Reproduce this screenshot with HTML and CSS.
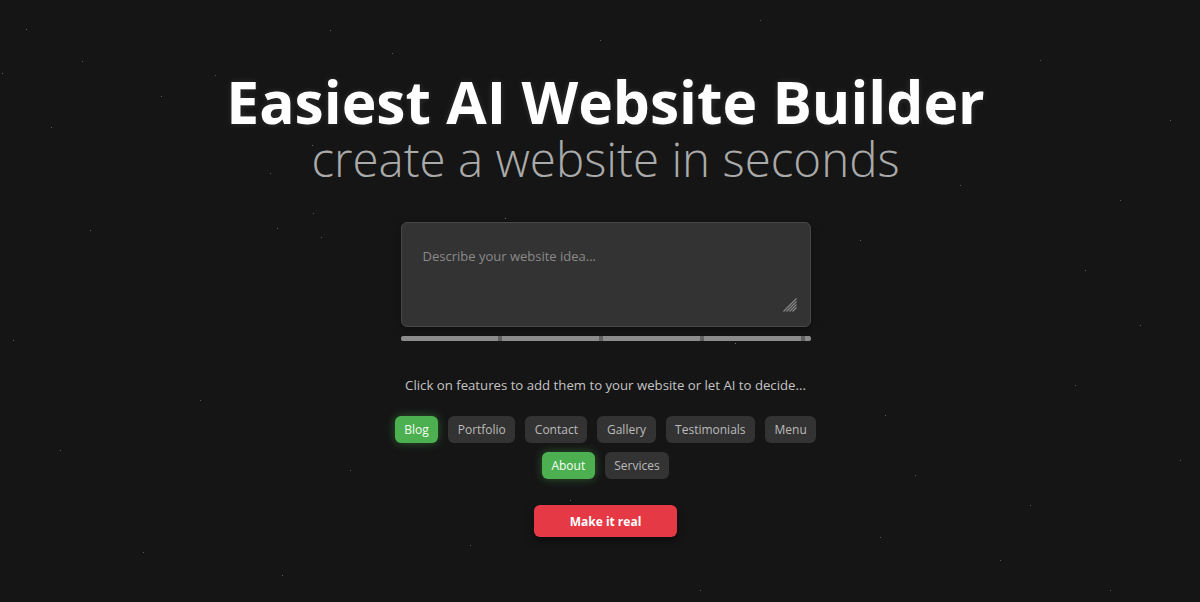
FILE: index.html
```html
<!DOCTYPE html>
<html lang="en">
<head>
<meta charset="utf-8">
<title>Easiest AI Website Builder</title>
<link rel="stylesheet" href="styles.css">
</head>
<body>
<div class="stars" aria-hidden="true"></div>
<main class="page">
  <header class="hero">
    <h1 class="title">Easiest AI Website Builder</h1>
    <p class="subtitle">create a website in seconds</p>
  </header>
  <section class="composer">
    <div class="field">
      <textarea class="idea" placeholder="Describe your website idea..."></textarea>
      <svg class="grip" width="14" height="14" viewBox="0 0 14 14" aria-hidden="true">
        <path d="M13.5 0.5 L0.5 13.5 M13.5 3.5 L3.5 13.5 M13.5 6.5 L6.5 13.5 M13.5 9.5 L9.5 13.5" stroke="#8a8a8a" stroke-width="1.1" fill="none"/>
      </svg>
    </div>
    <div class="progress">
      <span class="seg"></span><span class="seg"></span><span class="seg"></span><span class="seg"></span><span class="seg end"></span>
    </div>
  </section>
  <p class="hint">Click on features to add them to your website or let AI to decide...</p>
  <div class="chips">
    <div class="chip-row">
      <button class="chip on">Blog</button>
      <button class="chip">Portfolio</button>
      <button class="chip">Contact</button>
      <button class="chip">Gallery</button>
      <button class="chip">Testimonials</button>
      <button class="chip">Menu</button>
    </div>
    <div class="chip-row">
      <button class="chip on">About</button>
      <button class="chip">Services</button>
    </div>
  </div>
  <button class="cta">Make it real</button>
</main>
</body>
</html>
```

FILE: styles.css
```css
html, body {
  margin: 0;
  height: 100%;
}
body {
  background: #151515;
  color: #fff;
  font-family: "Open Sans", "Noto Sans", "Liberation Sans", sans-serif;
  overflow: hidden;
  position: relative;
}
.stars {
  position: absolute;
  left: 0;
  top: 0;
  width: 1px;
  height: 1px;
  background: transparent;
  box-shadow:
    26px 29px rgba(255,255,255,.35), 82px 61px rgba(255,255,255,.3), 2px 73px rgba(255,255,255,.3),
    215px 75px rgba(255,255,255,.3), 161px 96px rgba(255,255,255,.3), 51px 127px rgba(255,255,255,.3),
    392px 53px rgba(255,255,255,.3), 312px 145px rgba(255,255,255,.35), 270px 173px rgba(255,255,255,.3),
    313px 213px rgba(255,255,255,.3), 277px 228px rgba(255,255,255,.3), 321px 237px rgba(255,255,255,.3),
    282px 575px rgba(255,255,255,.3), 143px 552px rgba(255,255,255,.3), 880px 537px rgba(255,255,255,.3),
    1140px 325px rgba(255,255,255,.3), 1085px 270px rgba(255,255,255,.3), 1075px 385px rgba(255,255,255,.3),
    915px 475px rgba(255,255,255,.3), 885px 415px rgba(255,255,255,.3), 1030px 505px rgba(255,255,255,.3),
    13px 340px rgba(255,255,255,.3), 330px 30px rgba(255,255,255,.3), 470px 545px rgba(255,255,255,.3),
    700px 590px rgba(255,255,255,.3), 1110px 590px rgba(255,255,255,.3), 505px 218px rgba(255,255,255,.4),
    1170px 120px rgba(255,255,255,.3), 1040px 60px rgba(255,255,255,.3), 960px 185px rgba(255,255,255,.3),
    860px 240px rgba(255,255,255,.3), 1180px 460px rgba(255,255,255,.3), 60px 450px rgba(255,255,255,.3),
    200px 400px rgba(255,255,255,.3), 350px 470px rgba(255,255,255,.3), 760px 20px rgba(255,255,255,.3),
    600px 40px rgba(255,255,255,.3), 1000px 560px rgba(255,255,255,.3), 90px 230px rgba(255,255,255,.3),
    1120px 200px rgba(255,255,255,.3), 735px 343px rgba(255,255,255,.4), 570px 500px rgba(255,255,255,.3);
  pointer-events: none;
}
.page {
  display: flex;
  flex-direction: column;
  align-items: center;
  padding-top: 70px;
  padding-left: 11px;
}
.hero {
  text-align: center;
}
.title {
  margin: 0;
  font-size: 58.7px;
  font-weight: 700;
  line-height: 62px;
  color: #fff;
  text-shadow: 0 0 6px rgba(255,255,255,.12);
}
.subtitle {
  margin: 0;
  font-size: 47.5px;
  font-weight: 300;
  line-height: 54px;
  color: #aaa;
}
.composer {
  margin-top: 36px;
  width: 410px;
}
.field {
  position: relative;
}
.idea {
  display: block;
  box-sizing: border-box;
  width: 410px;
  height: 105px;
  margin: 0;
  padding: 23px 21px;
  background: #333;
  border: 1px solid #474747;
  border-radius: 6px;
  color: #ddd;
  font-family: inherit;
  font-size: 13px;
  line-height: 20px;
  outline: none;
  resize: none;
  box-shadow: 0 2px 6px rgba(0,0,0,.4);
}
.idea::placeholder {
  color: #8a8a8a;
}
.grip {
  position: absolute;
  right: 14px;
  top: 76px;
  pointer-events: none;
}
.progress {
  display: flex;
  gap: 4px;
  height: 5px;
  margin-top: 9px;
  background: #636363;
  border-radius: 3px;
  overflow: hidden;
}
.seg {
  flex: 0 0 97px;
  background: #8c8c8c;
}
.seg.end {
  flex: 1;
}
.hint {
  margin: 35px 0 0;
  font-size: 13.2px;
  line-height: 18px;
  color: #c4c4c4;
}
.chips {
  margin-top: 22px;
  display: flex;
  flex-direction: column;
  align-items: center;
  gap: 9px;
}
.chip-row {
  display: flex;
  gap: 10px;
  justify-content: center;
}
.chip {
  height: 27px;
  padding: 0 9.5px;
  border: none;
  border-radius: 6px;
  background: #333;
  color: #bbb;
  font-family: inherit;
  font-size: 12px;
  cursor: pointer;
}
.chip.on {
  background: #4caf50;
  color: #f4fff4;
  box-shadow: 0 0 10px rgba(76,175,80,.45);
}
.cta {
  margin-top: 26px;
  width: 143px;
  height: 32px;
  border: none;
  border-radius: 6px;
  background: #e63946;
  color: #fff;
  font-family: inherit;
  font-size: 12px;
  font-weight: 700;
  box-shadow: 0 3px 8px rgba(0,0,0,.5);
  cursor: pointer;
}
```
